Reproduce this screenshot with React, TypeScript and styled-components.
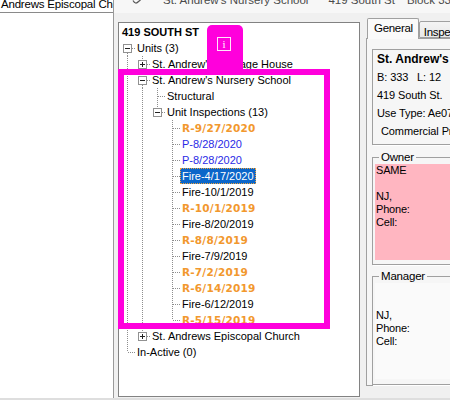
import React from 'react';
import styled, { createGlobalStyle } from 'styled-components';

const GlobalStyle = createGlobalStyle`
	html, body {
		margin: 0;
		padding: 0;
		background: #fff;
	}
	body {
		font-family: "Liberation Sans", Arial, sans-serif;
		font-size: 11px;
		color: #000;
	}
`;

const Screen = styled.div`
	position: relative;
	width: 450px;
	height: 400px;
	box-sizing: border-box;
	overflow: hidden;
	display: flex;
	background: #f0f0f0;
	border-bottom: 2px solid #dedede;
`;

/* window left behind the dialog */
const BackWindow = styled.div`
	flex: none;
	width: 113px;
	background: #fff;
	border-right: 1px solid #9a9a9a;
`;

const BackCaption = styled.div`
	height: 12px;
	overflow: hidden;
	border-bottom: 1px solid #8a8a8a;
	font-size: 11.5px;
	line-height: 12px;
	letter-spacing: -0.2px;
	white-space: nowrap;
`;

const ClippedLine = styled.div<{ $shift: number }>`
	margin-top: ${(p) => p.$shift}px;
	padding-left: 1px;
`;

const Dialog = styled.div`
	flex: 1;
	min-width: 0;
	display: flex;
	flex-direction: column;
`;

const TitleStrip = styled.div`
	flex: none;
	height: 13px;
	overflow: hidden;
	background: #f7f7f7;
	color: #4a4a4a;
	font-size: 11.5px;
	line-height: 14px;
	white-space: nowrap;
`;

const TitleRow = styled.div`
	display: flex;
	align-items: flex-start;
	margin-top: -7px;
`;

const TitleIcon = styled.svg`
	flex: none;
	margin: 7px 0 0 18px;
`;

const TitlePart = styled.span<{ $gap: number }>`
	margin-left: ${(p) => p.$gap}px;
`;

const Workspace = styled.div`
	flex: 1;
	min-height: 0;
	display: flex;
	align-items: flex-start;
	gap: 6px;
	padding: 5px 0 0 4px;
`;

/* tree view */
const TreePanel = styled.div`
	flex: none;
	width: 242px;
	height: 375px;
	margin-top: 4px;
	box-sizing: border-box;
	border: 1px solid #828282;
	background: #fff;
	padding: 1px 0 0 1px;
	overflow: hidden;
`;

const Row = styled.div`
	display: flex;
	align-items: center;
	height: 16px;
	white-space: nowrap;
`;

type Tone = 'head' | 'plain' | 'orange' | 'blue';

const toneColor: Record<Tone, string> = {
	head: '#000',
	plain: '#000',
	orange: '#f2982e',
	blue: '#2a2ae6',
};

const Label = styled.span<{ $tone: Tone; $selected?: boolean }>`
	display: block;
	height: 16px;
	line-height: 16px;
	padding: 0 2px;
	box-sizing: border-box;
	font-family: ${(p) =>
		p.$tone === 'orange'
			? '"DejaVu Sans", Verdana, sans-serif'
			: '"Liberation Sans", Arial, sans-serif'};
	font-size: ${(p) => (p.$tone === 'orange' ? '10.5px' : '11px')};
	letter-spacing: ${(p) => (p.$tone === 'orange' ? '0.2px' : '0')};
	font-weight: ${(p) => (p.$tone === 'orange' || p.$tone === 'head' ? 700 : 400)};
	color: ${(p) => (p.$selected ? '#fff' : toneColor[p.$tone])};
	background: ${(p) => (p.$selected ? '#0b66c9' : 'transparent')};
	outline: ${(p) => (p.$selected ? '1px dotted #f0a33a' : 'none')};
	outline-offset: -1px;
`;

const JointSvg = styled.svg`
	flex: none;
	display: block;
`;

type Joint =
	| { kind: 'guide'; on: boolean }
	| { kind: 'branch'; up: boolean; down: boolean; box?: '+' | '-' };

const DOT = '#8e8e8e';

const TreeJoint: React.FC<{ joint: Joint }> = ({ joint }) => {
	if (joint.kind === 'guide') {
		return (
			<JointSvg width="15" height="16" viewBox="0 0 15 16" shapeRendering="crispEdges">
				{joint.on && <line x1="7.5" y1="0" x2="7.5" y2="16" stroke={DOT} strokeDasharray="1 1" />}
			</JointSvg>
		);
	}
	const { up, down, box } = joint;
	return (
		<JointSvg width="15" height="16" viewBox="0 0 15 16" shapeRendering="crispEdges">
			{up && <line x1="7.5" y1="0" x2="7.5" y2={box ? 4 : 8} stroke={DOT} strokeDasharray="1 1" />}
			{down && <line x1="7.5" y1={box ? 13 : 8} x2="7.5" y2="16" stroke={DOT} strokeDasharray="1 1" />}
			<line x1={box ? 12 : 8} y1="8.5" x2="15" y2="8.5" stroke={DOT} strokeDasharray="1 1" />
			{box && (
				<>
					<rect x="3.5" y="4.5" width="8" height="8" fill="#fff" stroke="#919191" />
					<line x1="5" y1="8.5" x2="10" y2="8.5" stroke="#222" />
					{box === '+' && <line x1="7.5" y1="6" x2="7.5" y2="11" stroke="#222" />}
				</>
			)}
		</JointSvg>
	);
};

type TreeItem = {
	label: string;
	tone: Tone;
	joints: Joint[];
	selected?: boolean;
};

const g = (on: boolean): Joint => ({ kind: 'guide', on });
const b = (up: boolean, down: boolean, box?: '+' | '-'): Joint => ({ kind: 'branch', up, down, box });

const inspections: [string, Tone][] = [
	['R-9/27/2020', 'orange'],
	['P-8/28/2020', 'blue'],
	['P-8/28/2020', 'blue'],
	['Fire-4/17/2020', 'plain'],
	['Fire-10/1/2019', 'plain'],
	['R-10/1/2019', 'orange'],
	['Fire-8/20/2019', 'plain'],
	['R-8/8/2019', 'orange'],
	['Fire-7/9/2019', 'plain'],
	['R-7/2/2019', 'orange'],
	['R-6/14/2019', 'orange'],
	['Fire-6/12/2019', 'plain'],
	['R-5/15/2019', 'orange'],
];

const treeItems: TreeItem[] = [
	{ label: '419 SOUTH ST', tone: 'head', joints: [] },
	{ label: 'Units (3)', tone: 'plain', joints: [b(false, true, '-')] },
	{ label: "St. Andrew's Carriage House", tone: 'plain', joints: [g(true), b(true, true, '+')] },
	{ label: "St. Andrew's Nursery School", tone: 'plain', joints: [g(true), b(true, true, '-')] },
	{ label: 'Structural', tone: 'plain', joints: [g(true), g(true), b(true, true)] },
	{ label: 'Unit Inspections (13)', tone: 'plain', joints: [g(true), g(true), b(true, false, '-')] },
	...inspections.map(([label, tone], i) => ({
		label,
		tone,
		selected: label === 'Fire-4/17/2020',
		joints: [g(true), g(true), g(false), b(true, i < inspections.length - 1)],
	})),
	{ label: 'St. Andrews Episcopal Church', tone: 'plain', joints: [g(true), b(true, false, '+')] },
	{ label: 'In-Active (0)', tone: 'plain', joints: [b(true, false)] },
];

/* property tabs */
const TabArea = styled.div`
	flex: none;
	width: 220px;
	display: flex;
	flex-direction: column;
`;

const TabStrip = styled.div`
	display: flex;
	align-items: flex-end;
	height: 20px;
	padding-left: 1px;
`;

const Tab = styled.div<{ $active?: boolean }>`
	position: relative;
	z-index: ${(p) => (p.$active ? 1 : 0)};
	box-sizing: border-box;
	height: ${(p) => (p.$active ? '21px' : '17px')};
	margin-bottom: ${(p) => (p.$active ? '-1px' : '0')};
	padding: ${(p) => (p.$active ? '1px 5px 0 6px' : '2px 5px 0 4px')};
	line-height: 16px;
	font-size: 11.5px;
	letter-spacing: -0.3px;
	border: 1px solid #a0a0a0;
	border-bottom: ${(p) => (p.$active ? 'none' : '1px solid #a0a0a0')};
	border-radius: 2px 2px 0 0;
	background: ${(p) => (p.$active ? '#fafafa' : 'linear-gradient(#f4f4f4, #e8e8e8)')};
`;

const TabPage = styled.div`
	flex: 1;
	height: 360px;
	border: 1px solid #a0a0a0;
	background: #f6f6f6;
	padding: 10px 0 0 5px;
`;

const InfoBox = styled.div`
	border: 1px solid #a0a0a0;
	box-shadow: 1px 1px 0 #fff;
	padding: 0 0 4px 4px;
`;

const InfoLine = styled.div<{ $indent?: number; $bold?: boolean }>`
	height: 18px;
	line-height: 18px;
	padding-left: ${(p) => p.$indent ?? 0}px;
	font-size: ${(p) => (p.$bold ? '12px' : '11px')};
	font-weight: ${(p) => (p.$bold ? 700 : 400)};
	letter-spacing: ${(p) => (p.$bold ? '0' : '-0.1px')};
	white-space: nowrap;
`;

const Group = styled.fieldset<{ $gap: number }>`
	margin: ${(p) => p.$gap}px 0 0 0;
	padding: 0 2px ${(p) => (p.$gap > 5 ? 4 : 5)}px 2px;
	border: 1px solid #a0a0a0;
	box-shadow: 1px 1px 0 #fff;
	min-inline-size: 0;
`;

const GroupTitle = styled.legend`
	margin-left: 4px;
	padding: 0 2px;
	font-size: 11.5px;
	line-height: 13px;
	letter-spacing: -0.2px;
`;

const ContactCard = styled.div<{ $fill: string }>`
	height: 96px;
	background: ${(p) => p.$fill};
	padding-left: 1px;
	font-size: 11px;
	line-height: 13px;
	letter-spacing: -0.2px;
	white-space: pre;
`;

/* callout drawn over the tree */
const Highlight = styled.div`
	position: absolute;
	left: 118px;
	top: 69px;
	width: 212px;
	height: 260px;
	box-sizing: border-box;
	border: 6px solid #ff00dc;
	pointer-events: none;
`;

const Marker = styled.div`
	position: absolute;
	left: 207px;
	top: 25px;
	width: 36px;
	height: 44px;
	background: #ff00dc;
	border-radius: 5px 5px 0 0;
	padding: 12px 0 0 10px;
	box-sizing: border-box;
`;

const MarkerGlyph = styled.div`
	width: 14px;
	height: 14px;
	box-sizing: border-box;
	border: 1px solid #ffe6fa;
	color: #fff;
	font-family: "Liberation Serif", "Times New Roman", serif;
	font-size: 11px;
	line-height: 12px;
	text-align: center;
`;

const App: React.FC = () => {
	return (
		<>
			<GlobalStyle />
			<Screen>
				<BackWindow>
					<BackCaption>
						<ClippedLine $shift={-2}>Andrews Episcopal Church</ClippedLine>
					</BackCaption>
				</BackWindow>
				<Dialog>
					<TitleStrip>
						<TitleRow>
							<TitleIcon width="10" height="7" viewBox="0 0 10 7">
								<path d="M1 0.5 Q3.5 5 6.5 1.5 M6.5 1.5 L8.5 0" stroke="#555" fill="none" strokeWidth="1.2" />
							</TitleIcon>
							<TitlePart $gap={21}>St. Andrew's Nursery School</TitlePart>
							<TitlePart $gap={20}>419 South St</TitlePart>
							<TitlePart $gap={12}>Block 333, Lot 12</TitlePart>
						</TitleRow>
					</TitleStrip>
					<Workspace>
						<TreePanel>
							{treeItems.map((item, i) => (
								<Row key={i}>
									{item.joints.map((j, k) => (
										<TreeJoint key={k} joint={j} />
									))}
									<Label $tone={item.tone} $selected={item.selected}>
										{item.label}
									</Label>
								</Row>
							))}
						</TreePanel>
						<TabArea>
							<TabStrip>
								<Tab $active>General</Tab>
								<Tab>Inspections</Tab>
							</TabStrip>
							<TabPage>
								<InfoBox>
									<InfoLine $bold>St. Andrew's Nursery School</InfoLine>
									<InfoLine>B: 333&nbsp;&nbsp;&nbsp;L: 12</InfoLine>
									<InfoLine>419 South St.</InfoLine>
									<InfoLine>Use Type: Ae07</InfoLine>
									<InfoLine $indent={4}>Commercial Property</InfoLine>
								</InfoBox>
								<Group $gap={6}>
									<GroupTitle>Owner</GroupTitle>
									<ContactCard $fill="#ffb6c1">{'SAME\n\nNJ,\nPhone:\nCell:'}</ContactCard>
								</Group>
								<Group $gap={5}>
									<GroupTitle>Manager</GroupTitle>
									<ContactCard $fill="#fafafa">{'\n\nNJ,\nPhone:\nCell:'}</ContactCard>
								</Group>
							</TabPage>
						</TabArea>
					</Workspace>
				</Dialog>
				<Highlight />
				<Marker>
					<MarkerGlyph>i</MarkerGlyph>
				</Marker>
			</Screen>
		</>
	);
};

export default App;
